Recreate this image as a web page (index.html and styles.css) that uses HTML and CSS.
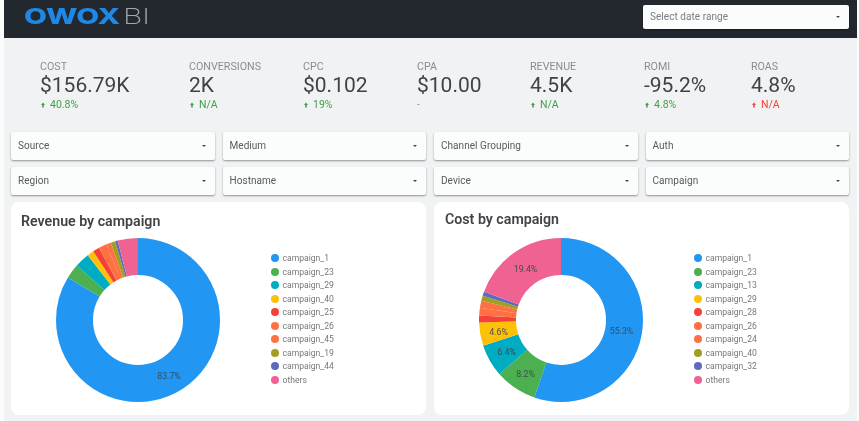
FILE: index.html
```html
<!DOCTYPE html>
<html lang="en">
<head>
<meta charset="utf-8">
<title>OWOX BI dashboard</title>
<link rel="stylesheet" href="styles.css">
</head>
<body>
<main class="page">
  <header class="topbar">
    <svg class="logo" width="130" height="28" viewBox="0 0 130 28" aria-label="OWOX BI">
      <text class="logo-owox" x="0" y="22" textLength="96" lengthAdjust="spacingAndGlyphs">OWOX</text>
      <text class="logo-bi" x="99" y="22" textLength="27" lengthAdjust="spacingAndGlyphs">BI</text>
    </svg>
    <div class="select date"><span>Select date range</span><i class="caret"></i></div>
  </header>

  <section class="kpis">
    <div class="kpi"><div class="kpi-label">COST</div><div class="kpi-value">$156.79K</div><div class="kpi-delta up"><svg class="arrow" viewBox="0 0 5 6"><path d="M2.5 0L5 3H3.5V6H1.500V3H0Z"/></svg>40.8%</div></div>
    <div class="kpi"><div class="kpi-label">CONVERSIONS</div><div class="kpi-value">2K</div><div class="kpi-delta up"><svg class="arrow" viewBox="0 0 5 6"><path d="M2.5 0L5 3H3.5V6H1.500V3H0Z"/></svg>N/A</div></div>
    <div class="kpi"><div class="kpi-label">CPC</div><div class="kpi-value">$0.102</div><div class="kpi-delta up"><svg class="arrow" viewBox="0 0 5 6"><path d="M2.5 0L5 3H3.5V6H1.500V3H0Z"/></svg>19%</div></div>
    <div class="kpi"><div class="kpi-label">CPA</div><div class="kpi-value">$10.00</div><div class="kpi-delta none">-</div></div>
    <div class="kpi"><div class="kpi-label">REVENUE</div><div class="kpi-value">4.5K</div><div class="kpi-delta up"><svg class="arrow" viewBox="0 0 5 6"><path d="M2.5 0L5 3H3.500V6H1.500V3H0Z"/></svg>N/A</div></div>
    <div class="kpi"><div class="kpi-label">ROMI</div><div class="kpi-value">-95.2%</div><div class="kpi-delta up"><svg class="arrow" viewBox="0 0 5 6"><path d="M2.5 0L5 3H3.5V6H1.500V3H0Z"/></svg>4.8%</div></div>
    <div class="kpi"><div class="kpi-label">ROAS</div><div class="kpi-value">4.8%</div><div class="kpi-delta bad"><svg class="arrow" viewBox="0 0 5 6"><path d="M2.5 0L5 3H3.5V6H1.500V3H0Z"/></svg>N/A</div></div>
  </section>

  <section class="filters">
    <div class="select"><span>Source</span><i class="caret"></i></div>
    <div class="select"><span>Medium</span><i class="caret"></i></div>
    <div class="select"><span>Channel Grouping</span><i class="caret"></i></div>
    <div class="select"><span>Auth</span><i class="caret"></i></div>
    <div class="select"><span>Region</span><i class="caret"></i></div>
    <div class="select"><span>Hostname</span><i class="caret"></i></div>
    <div class="select"><span>Device</span><i class="caret"></i></div>
    <div class="select"><span>Campaign</span><i class="caret"></i></div>
  </section>

  <section class="charts">
    <article class="card card-revenue">
      <h2 class="card-title">Revenue by campaign</h2>
      <div class="card-body">
        <svg class="donut" width="164" height="164" viewBox="-82 -82 164 164">
          <g class="ring" transform="rotate(-90)">
            <circle class="s1" r="63.5" pathLength="100" stroke-dasharray="83.7 16.3" stroke-dashoffset="0"/>
            <circle class="s2" r="63.5" pathLength="100" stroke-dasharray="2.9 97.1" stroke-dashoffset="-83.7"/>
            <circle class="s3" r="63.5" pathLength="100" stroke-dasharray="2.9 97.1" stroke-dashoffset="-86.6"/>
            <circle class="s4" r="63.5" pathLength="100" stroke-dasharray="1.3 98.7" stroke-dashoffset="-89.5"/>
            <circle class="s5" r="63.5" pathLength="100" stroke-dasharray="1.3 98.7" stroke-dashoffset="-90.8"/>
            <circle class="s6" r="63.5" pathLength="100" stroke-dasharray="1.6 98.4" stroke-dashoffset="-92.1"/>
            <circle class="s7" r="63.5" pathLength="100" stroke-dasharray="0.9 99.1" stroke-dashoffset="-93.7"/>
            <circle class="s8" r="63.5" pathLength="100" stroke-dasharray="0.9 99.1" stroke-dashoffset="-94.6"/>
            <circle class="s9" r="63.5" pathLength="100" stroke-dasharray="0.5 99.5" stroke-dashoffset="-95.5"/>
            <circle class="s10" r="63.5" pathLength="100" stroke-dasharray="4 96" stroke-dashoffset="-96"/>
          </g>
          <text class="pct" x="31" y="55.500">83.7%</text>
        </svg>
        <ul class="legend">
          <li><i class="dot d1"></i>campaign_1</li>
          <li><i class="dot d2"></i>campaign_23</li>
          <li><i class="dot d3"></i>campaign_29</li>
          <li><i class="dot d4"></i>campaign_40</li>
          <li><i class="dot d5"></i>campaign_25</li>
          <li><i class="dot d6"></i>campaign_26</li>
          <li><i class="dot d7"></i>campaign_45</li>
          <li><i class="dot d8"></i>campaign_19</li>
          <li><i class="dot d9"></i>campaign_44</li>
          <li><i class="dot d10"></i>others</li>
        </ul>
      </div>
    </article>
    <article class="card card-cost">
      <h2 class="card-title">Cost by campaign</h2>
      <div class="card-body">
        <svg class="donut" width="164" height="164" viewBox="-82 -82 164 164">
          <g class="ring" transform="rotate(-90)">
            <circle class="s1" r="63.5" pathLength="100" stroke-dasharray="55.3 44.7" stroke-dashoffset="0"/>
            <circle class="s2" r="63.5" pathLength="100" stroke-dasharray="8.2 91.8" stroke-dashoffset="-55.3"/>
            <circle class="s3" r="63.5" pathLength="100" stroke-dasharray="6.4 93.6" stroke-dashoffset="-63.5"/>
            <circle class="s4" r="63.5" pathLength="100" stroke-dasharray="4.6 95.4" stroke-dashoffset="-69.9"/>
            <circle class="s5" r="63.5" pathLength="100" stroke-dasharray="1.4 98.6" stroke-dashoffset="-74.5"/>
            <circle class="s6" r="63.5" pathLength="100" stroke-dasharray="1.5 98.5" stroke-dashoffset="-75.9"/>
            <circle class="s7" r="63.5" pathLength="100" stroke-dasharray="1.4 98.6" stroke-dashoffset="-77.4"/>
            <circle class="s8" r="63.5" pathLength="100" stroke-dasharray="1 99" stroke-dashoffset="-78.8"/>
            <circle class="s9" r="63.5" pathLength="100" stroke-dasharray="0.8 99.2" stroke-dashoffset="-79.8"/>
            <circle class="s10" r="63.5" pathLength="100" stroke-dasharray="19.4 80.6" stroke-dashoffset="-80.6"/>
          </g>
          <text class="pct" x="60.500" y="10.500">55.3%</text>
          <text class="pct" x="-35.500" y="-51.500">19.4%</text>
          <text class="pct" x="-35.500" y="53.500">8.2%</text>
          <text class="pct" x="-54.500" y="31.500">6.4%</text>
          <text class="pct" x="-62.500" y="11.500">4.6%</text>
        </svg>
        <ul class="legend">
          <li><i class="dot d1"></i>campaign_1</li>
          <li><i class="dot d2"></i>campaign_23</li>
          <li><i class="dot d3"></i>campaign_13</li>
          <li><i class="dot d4"></i>campaign_29</li>
          <li><i class="dot d5"></i>campaign_28</li>
          <li><i class="dot d6"></i>campaign_26</li>
          <li><i class="dot d7"></i>campaign_24</li>
          <li><i class="dot d8"></i>campaign_40</li>
          <li><i class="dot d9"></i>campaign_32</li>
          <li><i class="dot d10"></i>others</li>
        </ul>
      </div>
    </article>
  </section>
</main>
</body>
</html>
```
FILE: styles.css
```css
* { box-sizing: border-box; }
html, body { height: 100%; }
body {
  margin: 0;
  padding: 0 2px 0 4px;
  background: #fbfbfb;
  font-family: Roboto, "Liberation Sans", sans-serif;
  overflow: hidden;
}
.page {
  height: 421px;
  background: #f1f2f4;
  filter: blur(0.4px);
}
.topbar {
  height: 38px;
  background: #23282f;
  display: flex;
  align-items: flex-start;
  justify-content: space-between;
  padding: 5px 8px 0 20px;
}
.logo { margin-top: -3px; }
.logo-owox { font-family: Inter, sans-serif; font-weight: 800; font-size: 22px; fill: #1f88e5; }
.logo-bi { font-family: Inter, sans-serif; font-weight: 200; font-size: 22px; fill: #a3a5a8; }
.select {
  display: flex;
  align-items: center;
  justify-content: space-between;
  height: 28px;
  padding: 0 9px 1px 7px;
  background: #fbfcfc;
  border-radius: 2px;
  box-shadow: 0 1px 2px rgba(0, 0, 0, 0.4);
  font-size: 10px;
  letter-spacing: 0.05px;
  color: #555a5e;
}
.select.date { width: 206px; height: 24px; color: #7a7d80; }
.caret {
  width: 0;
  height: 0;
  border-left: 2.5px solid transparent;
  border-right: 2.5px solid transparent;
  border-top: 2.5px solid #444;
}
.kpis {
  display: grid;
  grid-template-columns: 149px 114px 114px 113px 114px 107px auto;
  padding: 22px 0 0 36px;
  height: 94px;
}
.kpi-label { font-size: 10.700px; line-height: 13px; color: #8a8d90; }
.kpi-value { font-size: 21px; line-height: 24px; color: #3f4347; }
.kpi-delta { display: flex; align-items: center; gap: 5px; font-size: 10.500px; line-height: 13px; margin-top: 1px; }
.arrow { width: 4px; height: 6px; fill: currentColor; margin: 1px 0 0 1px; }
.up { color: #43a047; }
.bad { color: #f44336; }
.none { color: #999; }
.filters {
  display: grid;
  grid-template-columns: repeat(4, 1fr);
  gap: 7px 8px;
  padding: 0 8px 0 7px;
}
.charts {
  display: grid;
  grid-template-columns: 1fr 1fr;
  gap: 8px;
  padding: 7px 8px 0 7px;
}
.card {
  height: 213px;
  background: #fff;
  border-radius: 8px;
}
.card-title {
  margin: 0;
  padding: 0 0 0 10px;
  font-size: 14.200px;
  font-weight: 600;
  line-height: 18px;
  color: #3f4347;
}
.card-revenue .card-title { padding-top: 10px; height: 35.500px; }
.card-cost .card-title { padding-top: 8px; padding-left: 11px; height: 35.500px; }
.card-body { display: flex; align-items: flex-start; padding-left: 44.500px; }
.ring circle { fill: none; stroke-width: 37; }
.s1 { stroke: #2196f3; }
.s2 { stroke: #4caf50; }
.s3 { stroke: #00acc1; }
.s4 { stroke: #ffc107; }
.s5 { stroke: #f44336; }
.s6 { stroke: #ff7043; }
.s7 { stroke: #ff7043; }
.s8 { stroke: #a19f1f; }
.s9 { stroke: #5c6bc0; }
.s10 { stroke: #f06292; }
.pct {
  font-size: 8.800px;
  text-anchor: middle;
  dominant-baseline: central;
  fill: #37474f;
  fill-opacity: 0.9;
}
.legend {
  list-style: none;
  margin: 14px 0 0 51px;
  padding: 0;
}
.legend li {
  display: flex;
  align-items: center;
  gap: 4px;
  height: 13.500px;
  font-size: 8.600px;
  color: #75787b;
}
.dot { width: 8px; height: 8px; border-radius: 50%; }
.d1 { background: #2196f3; }
.d2 { background: #4caf50; }
.d3 { background: #00acc1; }
.d4 { background: #ffc107; }
.d5 { background: #f44336; }
.d6 { background: #ff7043; }
.d7 { background: #ff7043; }
.d8 { background: #a19f1f; }
.d9 { background: #5c6bc0; }
.d10 { background: #f06292; }
```
